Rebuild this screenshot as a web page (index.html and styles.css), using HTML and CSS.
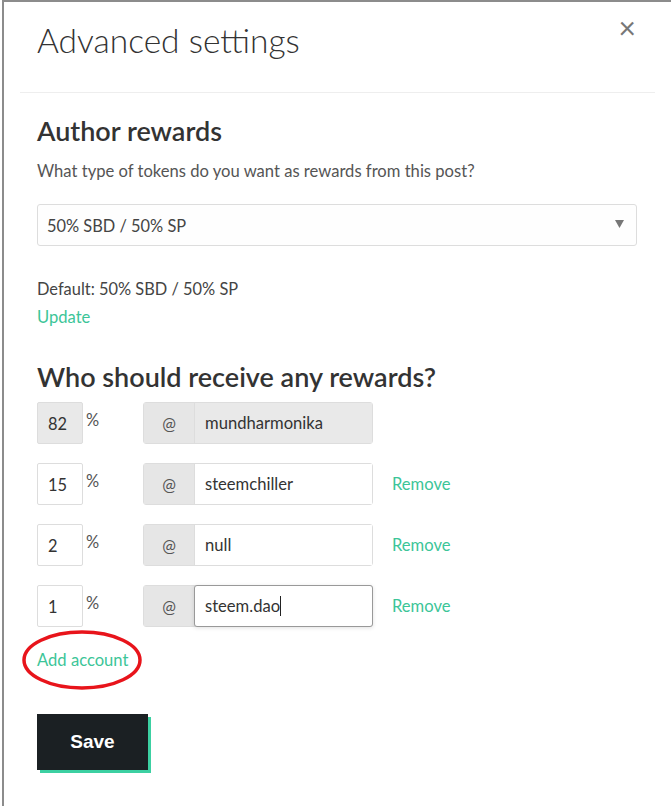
FILE: index.html
```html
<!DOCTYPE html>
<html lang="en">
<head>
  <meta charset="UTF-8">
  <meta name="viewport" content="width=device-width, initial-scale=1.0">
  <title>Advanced settings</title>
  <link rel="stylesheet" href="styles.css">
</head>
<body>
  <div class="modal">
    <div class="modal-header">
      <h1>Advanced settings</h1>
      <span class="close-button">&times;</span>
    </div>
    <div class="modal-body">
      <h2>Author rewards</h2>
      <p class="hint">What type of tokens do you want as rewards from this post?</p>
      <div class="select-box">
        <span>50% SBD / 50% SP</span>
        <svg class="select-arrow" width="9" height="8" viewBox="0 0 9 8"><path d="M0 0 L9 0 L4.5 8 Z" fill="#777"/></svg>
      </div>
      <p class="default-text">Default: 50% SBD / 50% SP</p>
      <a class="link update-link">Update</a>

      <h2 class="beneficiaries-title">Who should receive any rewards?</h2>
      <div class="beneficiaries">
        <div class="row disabled">
          <div class="percent">82</div>
          <span class="percent-sign">%</span>
          <div class="account-group">
            <span class="addon">@</span>
            <div class="account">mundharmonika</div>
          </div>
        </div>
        <div class="row">
          <div class="percent">15</div>
          <span class="percent-sign">%</span>
          <div class="account-group">
            <span class="addon">@</span>
            <div class="account">steemchiller</div>
          </div>
          <a class="link remove-link">Remove</a>
        </div>
        <div class="row">
          <div class="percent">2</div>
          <span class="percent-sign">%</span>
          <div class="account-group">
            <span class="addon">@</span>
            <div class="account">null</div>
          </div>
          <a class="link remove-link">Remove</a>
        </div>
        <div class="row">
          <div class="percent">1</div>
          <span class="percent-sign">%</span>
          <div class="account-group">
            <span class="addon">@</span>
            <div class="account focused">steem.dao<span class="caret"></span></div>
          </div>
          <a class="link remove-link">Remove</a>
        </div>
      </div>

      <div class="add-account">
        <a class="link">Add account</a>
        <svg class="highlight" width="124" height="64" viewBox="0 0 124 64"><ellipse cx="62" cy="32" rx="58" ry="28" fill="none" stroke="#e8141b" stroke-width="3.5"/></svg>
      </div>

      <button class="save-button">Save</button>
    </div>
  </div>
</body>
</html>
```

FILE: styles.css
```css
body {
  margin: 0;
  background-color: #fff;
  font-family: Lato, "Open Sans", sans-serif;
  color: #333;
}
.modal {
  margin-left: 2px;
  min-height: 804px;
  border-top: 2px solid #8c8c8c;
  border-left: 2px solid #8c8c8c;
  padding: 0 16px;
}
.modal-header {
  position: relative;
  padding: 18px 17px 32px;
  border-bottom: 1px solid #eee;
}
.modal-header h1 {
  margin: 0;
  font-size: 33.5px;
  line-height: 40px;
  font-weight: 300;
  color: #333;
}
.close-button {
  position: absolute;
  top: 10px;
  right: 19px;
  font-size: 30px;
  line-height: 30px;
  color: #777;
  font-weight: 400;
}
.modal-body {
  padding: 23px 18px 0 17px;
}
.modal-body h2 {
  margin: 0;
  font-size: 27px;
  line-height: 30px;
  font-weight: 600;
  color: #333;
}
.hint {
  margin: 13px 0 0;
  font-size: 16.6px;
  line-height: 24px;
  color: #555;
}
.select-box {
  margin-top: 21px;
  height: 42px;
  box-sizing: border-box;
  border: 1px solid #ddd;
  border-radius: 3px;
  background-color: #fefefe;
  display: flex;
  align-items: center;
  justify-content: space-between;
  padding: 0 12px 0 9px;
  font-size: 16.4px;
  color: #444;
}
.select-arrow {
  margin-top: -2px;
}
.default-text {
  margin: 31px 0 0;
  font-size: 16.4px;
  line-height: 24px;
  color: #444;
}
.link {
  color: #3cc598;
  font-size: 16.6px;
  line-height: 24px;
  cursor: pointer;
}
.update-link {
  display: block;
  margin-top: 4px;
}
.modal-body .beneficiaries-title {
  margin-top: 33px;
}
.beneficiaries {
  margin-top: 10px;
  display: flex;
  flex-direction: column;
  gap: 19px;
}
.row {
  display: flex;
  align-items: center;
  height: 42px;
}
.percent {
  width: 46px;
  height: 42px;
  box-sizing: border-box;
  border: 1px solid #ddd;
  border-radius: 2px;
  padding: 0 10px;
  display: flex;
  align-items: center;
  font-size: 16.4px;
  color: #333;
  background-color: #fff;
}
.percent-sign {
  width: 60px;
  box-sizing: border-box;
  padding-left: 3px;
  align-self: flex-start;
  margin-top: 8px;
  font-size: 16.4px;
  color: #555;
}
.account-group {
  display: flex;
  width: 230px;
  height: 42px;
  box-sizing: border-box;
  border: 1px solid #ddd;
  border-radius: 3px;
}
.addon {
  width: 50px;
  background-color: #e6e6e6;
  border-right: 1px solid #ddd;
  display: flex;
  align-items: center;
  justify-content: center;
  font-size: 16.4px;
  color: #555;
}
.account {
  flex: 1;
  display: flex;
  align-items: center;
  padding: 0 10px;
  font-size: 16.6px;
  color: #333;
  background-color: #fff;
}
.account.focused {
  margin: -1px;
  border: 1px solid #999;
  border-radius: 3px;
  box-shadow: 0 1px 4px rgba(0, 0, 0, 0.12);
}
.caret {
  display: inline-block;
  width: 1px;
  height: 20px;
  background-color: #222;
}
.remove-link {
  margin-left: 19px;
}
.row.disabled .percent,
.row.disabled .account {
  background-color: #e9e9e9;
}
.row.disabled .addon {
  background-color: #e6e6e6;
}
.add-account {
  position: relative;
  margin-top: 21px;
  width: max-content;
}
.highlight {
  position: absolute;
  left: -17px;
  top: -20px;
}
.save-button {
  margin-top: 42px;
  width: 111px;
  height: 56px;
  border: none;
  background-color: #1b2023;
  color: #fff;
  font-family: "Liberation Sans", Arial, sans-serif;
  font-weight: 700;
  font-size: 19px;
  box-shadow: 3px 3px 0 #3cd0a2;
  cursor: pointer;
}
```
